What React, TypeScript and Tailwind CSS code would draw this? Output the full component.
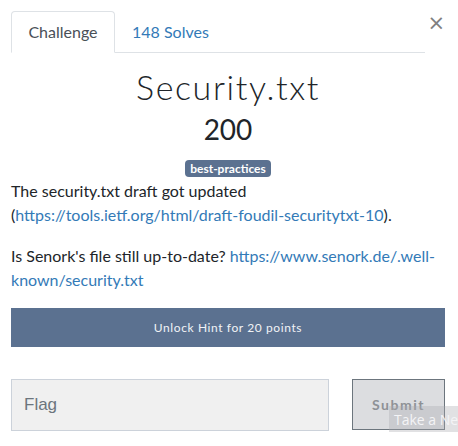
import React from "react";

export default function App() {
  return (
    <div className="w-[458px] h-[446px] bg-white overflow-hidden relative" style={{ fontFamily: "Lato, 'Noto Sans', sans-serif" }}>
      <div className="pl-[11px] pr-[13px] pt-[11px]">
        <div className="flex items-start">
          <div className="flex w-[420px] border-b border-[#dee2e6] h-[42px]">
            <div className="w-[104px] h-[42px] border border-[#dee2e6] border-b-white rounded-t-[4px] bg-white flex items-center justify-center text-[16px] text-[#495057] -mb-px">
              Challenge
            </div>
            <div className="h-[41px] flex items-center px-[17px] text-[16px] text-[#337ab7]">148 Solves</div>
          </div>
          <div className="ml-[2px] mt-[2px] text-[#808080] text-[21px] leading-none" style={{ fontFamily: "'DejaVu Sans', sans-serif" }}>
            ×
          </div>
        </div>

        <div className="text-center mt-[12px]">
          <h1 className="text-[34px] leading-[44px] font-light text-[#212529] tracking-[1.6px]">Security.txt</h1>
          <div className="text-[28px] leading-[40px] text-[#212529]">200</div>
          <div className="mt-[11px] flex justify-center">
            <span className="bg-[#5b7190] text-white text-[12px] font-bold leading-[17px] px-[5px] rounded-[4px]">best-practices</span>
          </div>
        </div>

        <div className="mt-[2px] text-[16px] leading-[24px] text-[#212529]">
          <p>
            The security.txt draft got updated (<a className="text-[#337ab7]">https://tools.ietf.org/html/draft-foudil-securitytxt-10</a>).
          </p>
          <p className="mt-[17px]">
            Is Senork's file still up-to-date? <a className="text-[#337ab7]">https://www.senork.de/.well-known/security.txt</a>
          </p>
        </div>

        <div className="mt-[16px] h-[39px] bg-[#5b7190] flex items-center justify-center text-[12px] text-[#f1f3f6] tracking-[0.6px]">
          Unlock Hint for 20 points
        </div>

        <div className="mt-[32px] flex justify-between">
          <div className="w-[318px] h-[52px] bg-[#f0f0f0] border border-[#ccd2da] flex items-center pl-[12px] text-[17px] text-[#6c757d]" style={{ fontFamily: "'Liberation Sans', Arial, sans-serif" }}>
            Flag
          </div>
          <div className="w-[93px] h-[51px] bg-[#dcdde0] border border-[#6c757d] flex items-center justify-center text-[14px] font-bold text-[#8e9196] tracking-[1.5px]">
            Submit
          </div>
        </div>
      </div>
      <div className="absolute left-[389px] top-[406px] w-[80px] h-[26px] bg-[rgba(170,170,175,0.35)] flex items-center pl-[5px] text-[14px] text-[#f4f4f6] whitespace-nowrap" style={{ fontFamily: "'Open Sans', sans-serif" }}>
        Take a New
      </div>
    </div>
  );
}
